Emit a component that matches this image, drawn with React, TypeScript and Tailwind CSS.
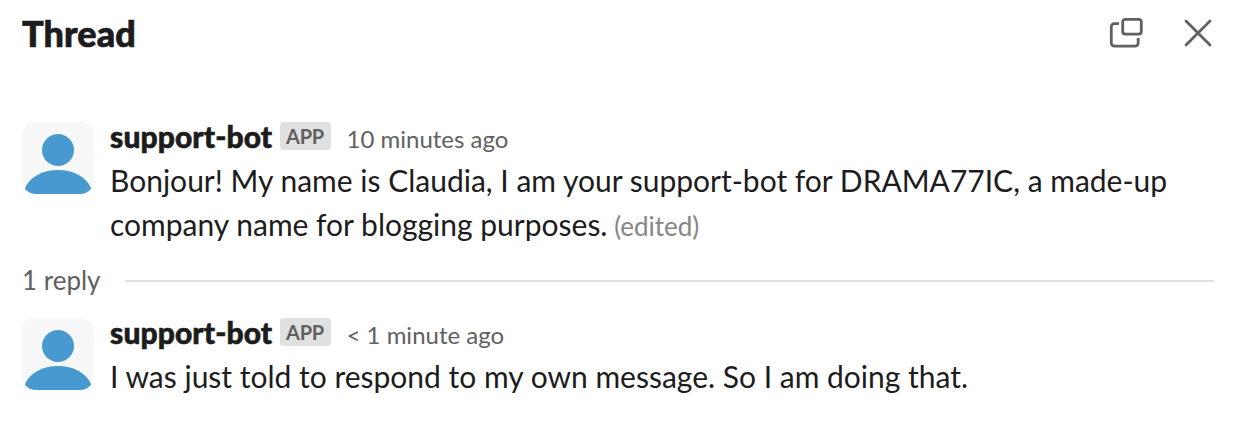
import type { ReactNode } from "react";

function Avatar() {
  return (
    <svg className="block h-[72px] w-[72px] shrink-0 rounded-[14px]" viewBox="0 0 72 72">
      <rect width="72" height="72" fill="#f8f8f8" />
      <circle cx="36" cy="28" r="16" fill="#4799cf" />
      <path d="M3 72V66C8 55 20 48 36 48s28 7 33 18v6z" fill="#4799cf" />
    </svg>
  );
}

function Message({ time, children }: { time: string; children: ReactNode }) {
  return (
    <article className="flex gap-4">
      <Avatar />
      <div className="min-w-0 flex-1">
        <div className="flex h-9 items-start whitespace-nowrap">
          <span className="w-[162px] text-[30px] leading-[28px] font-black tracking-[0.1px] [-webkit-text-stroke:0.6px_#1d1c1d]">support-bot</span>
          <span className="ml-2 h-7 w-[51px] rounded bg-[#e0e0e0] pl-1.5 text-[20px] leading-7 font-bold tracking-[-0.2px] text-[#616061]">APP</span>
          <span className="ml-[15.5px] text-[24px] leading-[34px] text-[#616061]">{time}</span>
        </div>
        <div className="text-[30px] leading-[44px] whitespace-nowrap">{children}</div>
      </div>
    </article>
  );
}

export default function App() {
  return (
    <main className="h-[426px] w-[1248px] overflow-hidden bg-white font-['Lato',sans-serif] text-[#1d1c1d]">
      <header className="flex h-[122px] justify-between pl-[22px] pr-[34px] pt-[17px]">
        <h1 className="text-[36px] leading-[32px] font-black tracking-[0.1px] [-webkit-text-stroke:0.7px_#1d1c1d]">Thread</h1>
        <div className="flex gap-[38px]">
          <svg className="h-8 w-9" viewBox="0 0 36 32" fill="none" stroke="#616061" strokeWidth="2.8">
            <rect x="14.7" y="2.3" width="18.6" height="14.8" rx="2.5" />
            <path d="M11 6.6H6.3a3 3 0 0 0-3 3v16.5a3 3 0 0 0 3 3h20.9a3 3 0 0 0 3-3V21" />
          </svg>
          <svg className="h-8 w-8" viewBox="0 0 32 32" fill="none" stroke="#616061" strokeWidth="2.8" strokeLinecap="round">
            <path d="M4 4l24 24M28 4L4 28" />
          </svg>
        </div>
      </header>
      <div className="pl-[22px]">
        <Message time="10 minutes ago">
          <p>Bonjour! My name is Claudia, I am your support-bot for DRAMA77IC, a made-up</p>
          <p>company name for blogging purposes. <span className="-ml-px text-[26px] leading-none text-[#868686]">(edited)</span></p>
        </Message>
      </div>
      <div className="mt-px mb-[3px] flex h-[68px] items-center gap-6 pl-[22px] pr-[34px]">
        <span className="pb-px text-[26px] leading-[39px] text-[#616061]">1 reply</span>
        <hr className="flex-1 border-t-2 border-[#e0e0e0]" />
      </div>
      <div className="pl-[22px]">
        <Message time="< 1 minute ago">
          <p>I was just told to respond to my own message. So I am doing that.</p>
        </Message>
      </div>
    </main>
  );
}
